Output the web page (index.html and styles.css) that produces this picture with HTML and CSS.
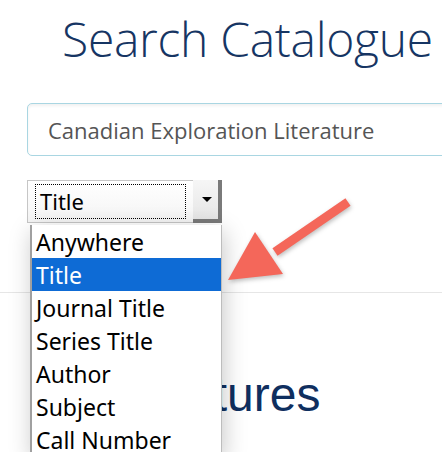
FILE: index.html
```html
<!DOCTYPE html>
<html>
<head>
<meta charset="utf-8">
<link rel="stylesheet" href="styles.css">
</head>
<body>
<div class="page">
  <h1 class="title">Search Catalogue</h1>
  <div class="search"><span class="search-text">Canadian Exploration Literature</span></div>
  <div class="select-wrap">
    <div class="select">
      <span class="value"><span class="focus">Title</span></span>
      <span class="btn"><span class="caret"></span></span>
    </div>
    <ul class="options">
      <li>Anywhere</li>
      <li class="selected">Title</li>
      <li>Journal Title</li>
      <li>Series Title</li>
      <li>Author</li>
      <li>Subject</li>
      <li>Call Number</li>
    </ul>
  </div>
  <hr class="rule">
  <h2 class="features">Features</h2>
  <svg class="arrow" width="140" height="110" viewBox="0 0 140 110">
    <line x1="123" y1="8" x2="50" y2="58" stroke="#f4675a" stroke-width="9" stroke-linecap="butt"/>
    <polygon points="3,86 30,38 58,80" fill="#f4675a"/>
  </svg>
</div>
</body>
</html>
```
FILE: styles.css
```css
html, body {
  margin: 0;
  padding: 0;
  background: #fff;
  overflow: hidden;
}
.page {
  position: relative;
  width: 442px;
  height: 452px;
  overflow: hidden;
}
.title {
  margin: 6px 0 0 62px;
  font-family: "Open Sans", sans-serif;
  font-weight: 300;
  font-size: 48px;
  letter-spacing: -0.3px;
  line-height: 66px;
  color: #163563;
  white-space: nowrap;
}
.search {
  margin: 31px 0 0 27px;
  width: 440px;
  height: 51px;
  border: 1px solid #a9d6e2;
  border-radius: 5px;
  box-shadow: inset 0 2px 3px rgba(0,0,0,0.06);
  display: flex;
  align-items: center;
  padding-left: 20px;
  box-sizing: content-box;
}
.search-text {
  font-family: "Open Sans", sans-serif;
  font-size: 22px;
  color: #555;
  white-space: nowrap;
}
.select-wrap {
  position: relative;
  margin: 24px 0 0 27px;
  width: 195px;
  height: 43px;
}
.select {
  display: flex;
  height: 43px;
  box-sizing: border-box;
  border: 1px solid #c6c6c6;
  background: linear-gradient(#ffffff, #f4f4f4);
}
.value {
  flex: 1;
  padding: 3px 7px 3px 7px;
  display: flex;
}
.focus {
  flex: 1;
  border: 1px dotted #000;
  font-family: "Noto Sans", sans-serif;
  font-size: 22px;
  line-height: 33px;
  padding-left: 4px;
  color: #000;
}
.btn {
  width: 29px;
  box-sizing: border-box;
  background: linear-gradient(#f6f6f6, #e6e6e6);
  border-right: 4px solid #7a7a7a;
  border-bottom: 4px solid #7a7a7a;
  margin: -1px -1px -1px 0;
  display: flex;
  align-items: center;
  justify-content: center;
}
.caret {
  width: 0;
  height: 0;
  border-left: 5px solid transparent;
  border-right: 5px solid transparent;
  border-top: 5px solid #000;
  margin-left: 2px;
}
.options {
  position: absolute;
  top: 45px;
  left: 3px;
  width: 192px;
  margin: 0;
  padding: 0;
  list-style: none;
  background: #fff;
  box-sizing: border-box;
  border-left: 2px solid #a0a0a0;
  border-right: 1px solid #bdbdbd;
  box-shadow: 2px 6px 22px rgba(0,0,0,0.22);
  z-index: 5;
}
.options li {
  height: 33px;
  line-height: 35px;
  padding-left: 4px;
  font-family: "Noto Sans", sans-serif;
  font-size: 23px;
  color: #000;
  white-space: nowrap;
}
.options li.selected {
  background: #0e6bd5;
  color: #fff;
}
.rule {
  margin: 69px 0 0 0;
  border: 0;
  border-top: 1px solid #e6e6e6;
  height: 0;
}
.features {
  margin: 74px 0 0 131px;
  font-family: "Liberation Sans", Arial, sans-serif;
  font-weight: normal;
  font-size: 48px;
  line-height: 56px;
  color: #0f2f5f;
  white-space: nowrap;
}
.arrow {
  position: absolute;
  left: 225px;
  top: 194px;
  filter: drop-shadow(1px 2px 2px rgba(0,0,0,0.25));
  z-index: 6;
}
```
